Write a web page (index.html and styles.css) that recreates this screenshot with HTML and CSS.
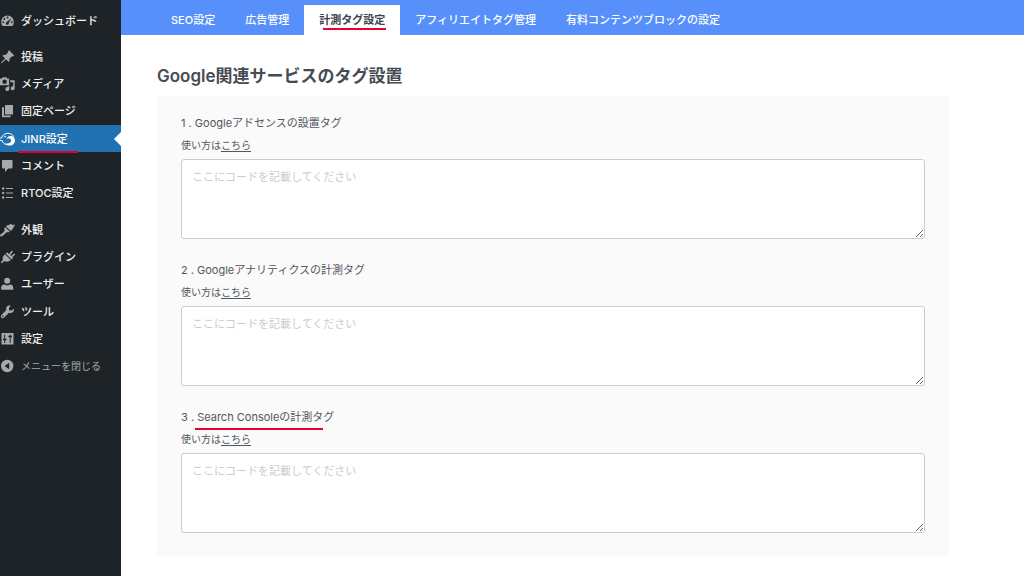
FILE: index.html
```html
<!DOCTYPE html>
<html lang="ja">
<head>
<meta charset="utf-8">
<meta name="viewport" content="width=device-width, initial-scale=1">
<title>計測タグ設定</title>
<link rel="stylesheet" href="styles.css">
</head>
<body>
<div class="app">
  <aside class="sidebar">
    <nav class="menu" aria-label="管理メニュー">
      <div class="menu-group menu-group-top">
        <a class="menu-item" href="#">
          <svg class="icon" viewBox="0 0 16 16"><path d="M7.500 2.500a6.300 6.300 0 0 0-6.300 6.300c0 1.500.5 3 1.300 4.200h10c.9-1.200 1.300-2.700 1.300-4.200a6.300 6.300 0 0 0-6.300-6.300z"/><g class="cut"><circle cx="7.500" cy="4.500" r=".9"/><circle cx="4.300" cy="6" r=".9"/><circle cx="3.200" cy="9.200" r=".9"/><circle cx="11.800" cy="9.200" r=".9"/><path d="M11.200 5.200 8.700 9.900a1.500 1.500 0 1 1-1.900-1z"/></g></svg>
          <span>ダッシュボード</span>
        </a>
      </div>
      <div class="menu-group menu-group-six">
        <a class="menu-item" href="#">
          <svg class="icon" viewBox="0 0 16 16"><path d="m9 1.200 5.200 5.200-1 1-1.100-.2-2.600 2.600c.3 1.200 0 2.400-.8 3.200L5.900 10.200 2.300 13.800.8 14.600l.7-1.600 3.600-3.600L2.400 6.700c.8-.8 2-1.100 3.200-.8l2.600-2.600L8 2.200z"/></svg>
          <span>投稿</span>
        </a>
        <a class="menu-item" href="#">
          <svg class="icon" viewBox="0 0 16 16"><path fill-rule="evenodd" d="M0 2.500h2l.8-1.300h3.500l.8 1.300h2v6.800H0zm4.600 1a2.200 2.200 0 1 0 0 4.400 2.200 2.200 0 0 0 0-4.400z"/><path d="M10.200 4.300h4.500v7.900a2 2 0 1 1-1.500-1.900V6.300h-3zM7.800 10.300h1.500V13a2 2 0 1 1-1.500-1.900z"/></svg>
          <span>メディア</span>
        </a>
        <a class="menu-item" href="#">
          <svg class="icon" viewBox="0 0 16 16"><path d="M5 2h8v9.500H5zM2 4.300h2v8.200h6.700v1.700H2z"/></svg>
          <span>固定ページ</span>
        </a>
        <a class="menu-item is-current" href="#" aria-current="page">
          <svg class="icon" viewBox="0 0 16 16"><path class="line" d="M0 7h1.500C2.500 4 5 2.300 7.800 2.300s4.800 1.300 6 3.400M0 9.300l2.200.4c.6 1.800 2 3.300 4 4"/><circle class="line" cx="5" cy="5.500" r=".5"/><path d="M9.400 5.200c3.200-.8 5.600 1.400 5.600 4.300 0 2.900-2.300 5-5.200 5-2.300 0-4-.9-4.900-2.600 1.600.9 3.700.9 5-.1 1.500-1.100 1.600-3.100.3-4.100-1-.8-2.700-.7-3.600.2.200-1.300 1.300-2.400 2.800-2.700z"/></svg>
          <span class="current-label">JINR設定</span>
        </a>
        <a class="menu-item" href="#">
          <svg class="icon" viewBox="0 0 16 16"><path d="M3 2h8.500a1 1 0 0 1 1 1v6.500a1 1 0 0 1-1 1H8.300L5 14v-3.500H3a1 1 0 0 1-1-1V3a1 1 0 0 1 1-1z"/></svg>
          <span>コメント</span>
        </a>
        <a class="menu-item" href="#">
          <svg class="icon" viewBox="0 0 16 16"><circle cx="3.200" cy="3.500" r="1.200"/><circle cx="3.200" cy="8" r="1.200"/><circle cx="3.200" cy="12.500" r="1.200"/><path d="M6 3h7v1H6zM6 7.500h7v1H6zM6 12h7v1H6z"/></svg>
          <span>RTOC設定</span>
        </a>
      </div>
      <div class="menu-group menu-group-six">
        <a class="menu-item" href="#">
          <svg class="icon" viewBox="0 0 16 16"><path d="m9.500 2.800 1.200-1 2.300 1.500L14.800 2l-.6 2.400-2.500 3.800-1.200.5-4.600-4.200L7 3.400zM5.200 5.200l4.500 4.200-.9.900-2.200-.1-1.800 1.700-2.600 2.300c-.7.6-1.600.3-1.900-.3-.3-.5-.1-1.200.4-1.600l2.800-2.100 1-1.500-.2-2.600z"/></svg>
          <span>外観</span>
        </a>
        <a class="menu-item" href="#">
          <svg class="icon" viewBox="0 0 16 16"><path d="m9 4.900 2.200-2.700c.4-.5 1-.4 1.300-.1.300.3.300.8 0 1.200L10.300 6l1 1 2.400-2.100c.4-.4.900-.3 1.200 0 .3.300.3.800-.1 1.200l-2.500 2.100.7.900-1.500 1.300L5.700 4.600 7 3.200zM5 5.300l5.700 5.800c-1.900 1.700-4.400 2-6.300.9l-2.500 2.200-1-1 2.100-2.500C2 8.900 3.200 6.800 5 5.300z"/></svg>
          <span>プラグイン</span>
        </a>
        <a class="menu-item" href="#">
          <svg class="icon" viewBox="0 0 16 16"><circle cx="7.200" cy="4.700" r="3"/><path d="M4.200 8.600c1.700 1.100 4.300 1.100 6 0 2 .2 3 1.400 3 3v2.200h-12v-2.200c0-1.600 1-2.800 3-3z"/></svg>
          <span>ユーザー</span>
        </a>
        <a class="menu-item" href="#">
          <svg class="icon" viewBox="0 0 16 16"><path fill-rule="evenodd" d="M10.800 1.800 8.900 3.900l.3 2.400 2.400.3 2.100-1.900c.5 1.700-.2 3.200-1.500 3.900-1 .6-2.200.6-3.200.2l-4.800 4.800a1.900 1.900 0 0 1-2.800-2.700l4.900-4.800c-.4-1.100-.3-2.200.3-3.100.9-1.200 2.500-1.700 4.200-1.200zM2.800 11.500a.8.800 0 1 0 .1 1.600.8.800 0 0 0-.1-1.600z"/></svg>
          <span>ツール</span>
        </a>
        <a class="menu-item" href="#">
          <svg class="icon" viewBox="0 0 16 16"><path d="M1.500 2h12v11.500h-12z"/><path class="cut" d="M4.200 3.500h1v4.200h1.300v1.500H5.200V12h-1V9.200H2.900V7.700h1.300zM9.700 3.500h1v1.200H12v1.500h-1.300V12h-1V6.200H8.400V4.700h1.300z"/></svg>
          <span>設定</span>
        </a>
        <button class="menu-item is-collapse" type="button">
          <svg class="icon" viewBox="0 0 16 16"><circle cx="7.200" cy="8" r="6.200"/><path class="cut" d="M9.200 4.700v6.600L4.600 8z"/></svg>
          <span>メニューを閉じる</span>
        </button>
      </div>
    </nav>
  </aside>

  <div class="content">
    <nav class="tabs" aria-label="設定タブ">
      <a class="tab" href="#">SEO設定</a>
      <a class="tab" href="#">広告管理</a>
      <a class="tab is-active" href="#" aria-current="page"><span class="marked">計測タグ設定</span></a>
      <a class="tab" href="#">アフィリエイトタグ管理</a>
      <a class="tab" href="#">有料コンテンツブロックの設定</a>
    </nav>
    <main class="main">
      <h1 class="title">Google関連サービスのタグ設置</h1>
      <form class="panel">
        <div class="field">
          <label class="label" for="adsense">1 . Googleアドセンスの設置タグ</label>
          <p class="help">使い方は<a href="#">こちら</a></p>
          <textarea class="code" id="adsense" placeholder="ここにコードを記載してください"></textarea>
        </div>
        <div class="field">
          <label class="label" for="analytics">2 . Googleアナリティクスの計測タグ</label>
          <p class="help">使い方は<a href="#">こちら</a></p>
          <textarea class="code" id="analytics" placeholder="ここにコードを記載してください"></textarea>
        </div>
        <div class="field">
          <label class="label" for="console">3 . <span class="marked marked-label">Search Consoleの計測タグ</span></label>
          <p class="help">使い方は<a href="#">こちら</a></p>
          <textarea class="code" id="console" placeholder="ここにコードを記載してください"></textarea>
        </div>
      </form>
    </main>
  </div>
</div>
</body>
</html>
```

FILE: styles.css
```css
* {
  box-sizing: border-box;
}

body {
  margin: 0;
  font-family: Inter, "Noto Sans CJK JP", sans-serif;
  font-size: 11px;
  color: #50575e;
  background: #fff;
}

.app {
  display: flex;
  min-height: 100vh;
}

/* Sidebar */
.sidebar {
  flex: 0 0 121px;
  background: #1d2327;
}

.menu {
  display: flex;
  flex-direction: column;
  gap: 9px;
  padding-top: 7px;
}

.menu-group {
  display: grid;
  grid-auto-rows: 1fr;
}

.menu-group-top {
  height: 27px;
}

.menu-group-six {
  height: 164px;
}

.menu-item {
  position: relative;
  display: flex;
  align-items: center;
  gap: 5px;
  padding: 0;
  border: 0;
  background: none;
  font: inherit;
  font-weight: 500;
  line-height: 16px;
  color: #f0f0f1;
  text-align: left;
  text-decoration: none;
  white-space: nowrap;
}

.icon {
  flex: none;
  width: 16px;
  height: 16px;
  fill: #a7aaad;
}

.icon .cut {
  fill: #1d2327;
}

.icon .line {
  fill: none;
  stroke: #fff;
  stroke-width: 1;
}

.is-current {
  background: #2271b1;
  color: #fff;
}

.is-current .icon {
  fill: #fff;
}

.is-current::after {
  content: "";
  position: absolute;
  top: 50%;
  right: 0;
  margin-top: -7px;
  border: 7px solid transparent;
  border-left-width: 0;
  border-right-color: #fff;
}

.current-label::after {
  content: "";
  position: absolute;
  left: 18px;
  bottom: -1px;
  width: 60px;
  height: 2px;
  background: #e0002d;
}

.menu-item.is-collapse {
  font-size: 10px;
  font-weight: 400;
  color: #a7aaad;
}

/* Tabs */
.content {
  flex: 1;
  min-width: 0;
}

.tabs {
  display: flex;
  height: 35px;
  padding: 5px 35px 0;
  background: #5790fb;
}

.tab {
  padding: 0 15px;
  line-height: 30px;
  font-weight: 500;
  color: #fff;
  text-decoration: none;
  white-space: nowrap;
}

.tab.is-active {
  background: #fff;
  font-weight: 600;
  color: #3c434a;
}

.marked {
  position: relative;
}

.marked::after {
  content: "";
  position: absolute;
  left: 4px;
  right: -1px;
  bottom: -3px;
  height: 2px;
  background: #e8002f;
}

.marked-label::after {
  left: -2px;
  right: 11px;
  bottom: -6px;
}

/* Main panel */
.main {
  padding: 29px 75px 20px 36px;
}

.title {
  margin: 0 0 8px;
  font-size: 17px;
  line-height: 24px;
  font-weight: 600;
  color: #454c53;
}

.panel {
  display: flex;
  flex-direction: column;
  gap: 20px;
  padding: 16px 24px 23px;
  background: #fafafa;
}

.field {
  display: flex;
  flex-direction: column;
}

.label {
  line-height: 22px;
}

.help {
  margin: 0 0 3px;
  font-size: 10px;
  line-height: 22px;
}

.help a {
  color: inherit;
  text-underline-offset: 2px;
}

.code {
  width: 100%;
  height: 80px;
  padding: 8px 10px;
  border: 1px solid #ccc;
  border-radius: 3px;
  background: #fff;
  font: inherit;
  line-height: 18px;
  color: #50575e;
  resize: vertical;
}

.code::placeholder {
  color: #ccc;
}
```
